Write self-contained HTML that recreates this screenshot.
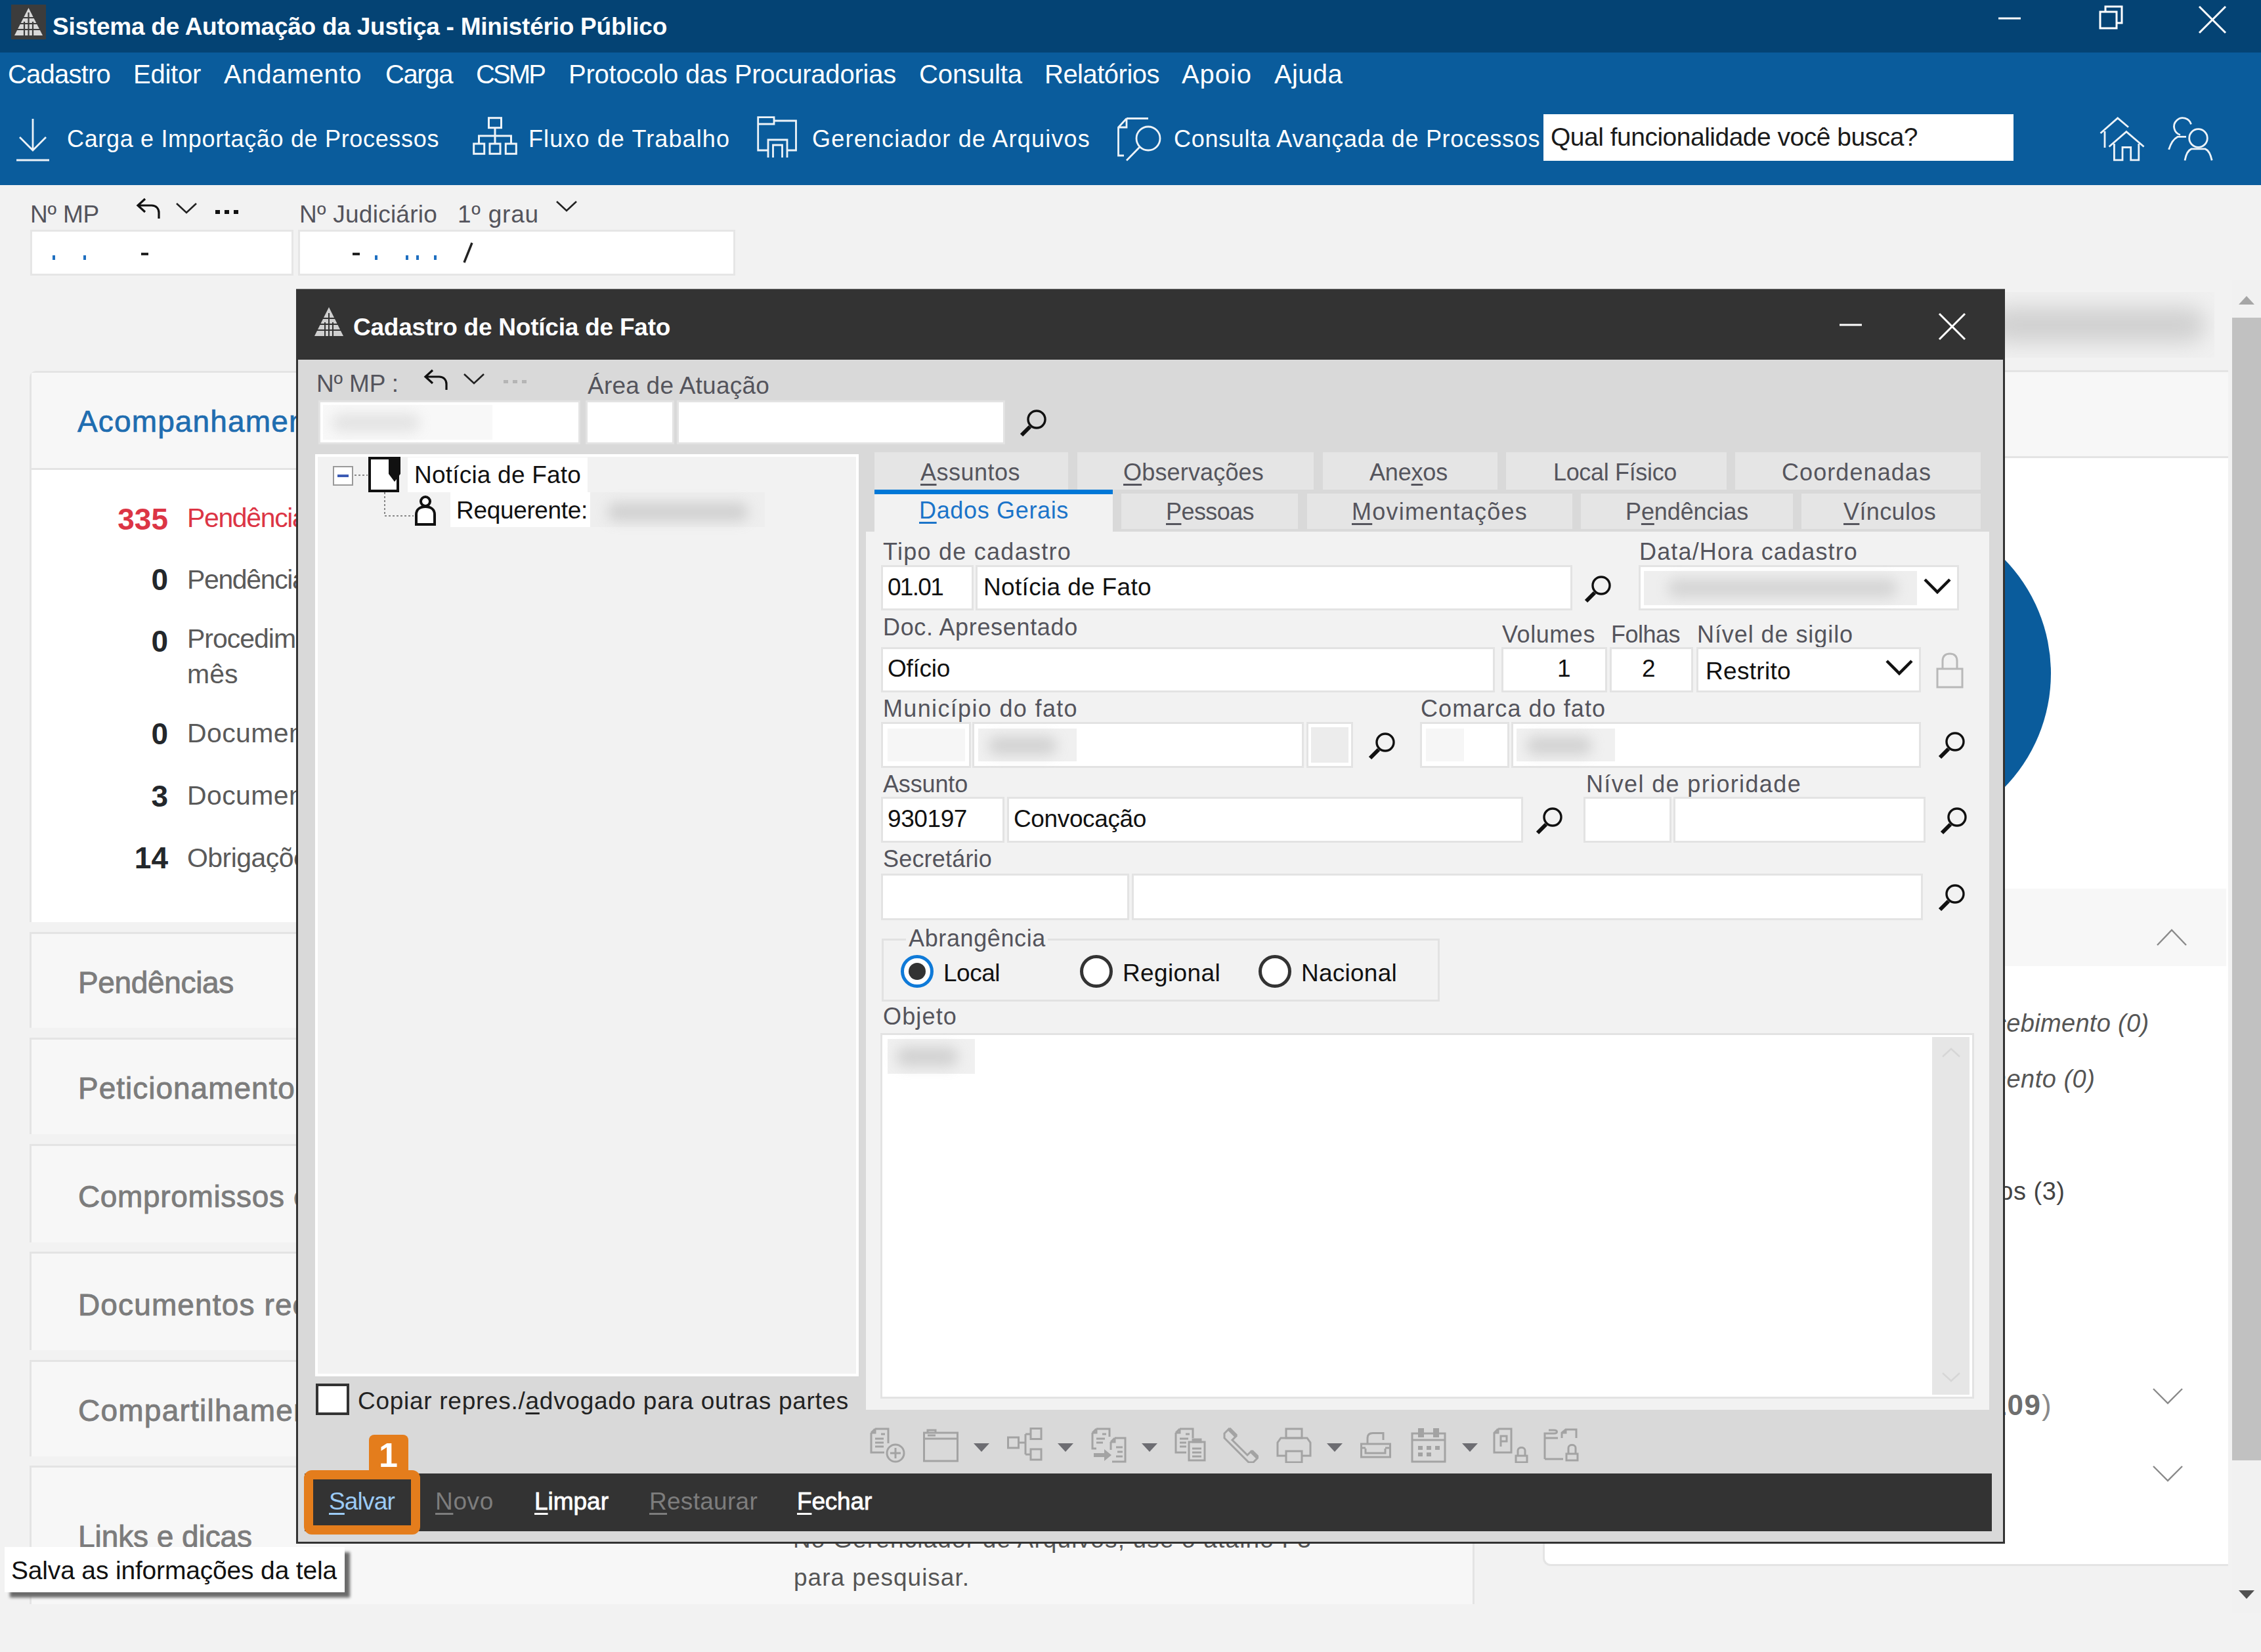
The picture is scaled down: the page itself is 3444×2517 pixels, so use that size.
<!DOCTYPE html>
<html lang="pt-BR"><head><meta charset="utf-8"><title>Sistema de Automação da Justiça - Ministério Público</title>
<style>
html,body{margin:0;padding:0}
body{width:3444px;height:2517px;overflow:hidden;background:#f2f2f2;font-family:"Liberation Sans", sans-serif;position:relative}
div,svg,span.t{position:absolute;box-sizing:border-box}
span.t{white-space:pre;line-height:1}
u{text-decoration-thickness:3px;text-underline-offset:5px}
</style></head>
<body>
<div style="left:0px;top:0px;width:3444px;height:80px;background:#044374;"></div>
<div style="left:0px;top:80px;width:3444px;height:202px;background:#0a5c9c;"></div>
<div style="left:17px;top:7px;width:53px;height:53px;background:#3c3c3c;"></div>
<svg style="left:17px;top:7px;" width="53" height="53" viewBox="0 0 53 53"><polygon points="26.5,5 48,47 5,47" fill="#d8d8d8"/><g stroke="#3c3c3c" stroke-width="2.2"><path d="M5 38H48M10 29H44M15 20H38M20 47V26M33 47V26M26.5 47V12"/></g></svg>
<span class="t" style="left:80.0px;top:21.7px;font-size:37px;color:#fff;font-weight:bold;letter-spacing:-0.24px;">Sistema de Automação da Justiça - Ministério Público</span>
<svg style="left:3030px;top:0px;" width="380" height="60" viewBox="0 0 380 60"><g stroke="#fff" stroke-width="3" fill="none"><path d="M14 28H48"/><path d="M169 18H194V43H169Z"/><path d="M177 18V10H202V35H194"/><path d="M320 10L360 50M360 10L320 50"/></g></svg>
<span class="t" style="left:12.0px;top:93.1px;font-size:40px;color:#fff;letter-spacing:-0.79px;">Cadastro</span>
<span class="t" style="left:203.0px;top:93.1px;font-size:40px;color:#fff;letter-spacing:-0.25px;">Editor</span>
<span class="t" style="left:341.0px;top:93.1px;font-size:40px;color:#fff;letter-spacing:0.60px;">Andamento</span>
<span class="t" style="left:587.0px;top:93.1px;font-size:40px;color:#fff;letter-spacing:-1.39px;">Carga</span>
<span class="t" style="left:725.0px;top:93.1px;font-size:40px;color:#fff;letter-spacing:-2.89px;">CSMP</span>
<span class="t" style="left:866.0px;top:93.1px;font-size:40px;color:#fff;letter-spacing:-0.21px;">Protocolo das Procuradorias</span>
<span class="t" style="left:1400.0px;top:93.1px;font-size:40px;color:#fff;letter-spacing:-0.11px;">Consulta</span>
<span class="t" style="left:1591.0px;top:93.1px;font-size:40px;color:#fff;letter-spacing:-0.51px;">Relatórios</span>
<span class="t" style="left:1800.0px;top:93.1px;font-size:40px;color:#fff;letter-spacing:0.94px;">Apoio</span>
<span class="t" style="left:1941.0px;top:93.1px;font-size:40px;color:#fff;letter-spacing:0.34px;">Ajuda</span>
<span class="t" style="left:102.0px;top:194.0px;font-size:36px;color:#fff;letter-spacing:0.67px;">Carga e Importação de Processos</span>
<span class="t" style="left:805.0px;top:194.0px;font-size:36px;color:#fff;letter-spacing:1.11px;">Fluxo de Trabalho</span>
<span class="t" style="left:1237.0px;top:194.0px;font-size:36px;color:#fff;letter-spacing:1.21px;">Gerenciador de Arquivos</span>
<span class="t" style="left:1788.0px;top:194.0px;font-size:36px;color:#fff;letter-spacing:0.68px;">Consulta Avançada de Processos</span>
<svg style="left:24px;top:178px;" width="52" height="70" viewBox="0 0 52 70"><g stroke="#fff" stroke-width="2.8" fill="none" opacity=".93"><path d="M26 3V50M6 31L26 51L46 31M1 66H51"/></g></svg>
<svg style="left:719.5px;top:177.5px;" width="68" height="58" viewBox="0 0 68 58"><g stroke="#fff" stroke-width="3" fill="none" opacity=".93"><rect x="24.5" y="1.7" width="19" height="15"/><path d="M34 16.7V41M9.5 41V29H58.5V41"/><rect x="1.7" y="41" width="16" height="15.3"/><rect x="26" y="41" width="16" height="15.3"/><rect x="50.3" y="41" width="16" height="15.3"/></g></svg>
<svg style="left:1153px;top:177px;" width="62" height="64" viewBox="0 0 62 64"><g stroke="#fff" stroke-width="2.8" fill="none" opacity=".93"><path d="M1.7 12V1.7H26V7H59.5V52H46M1.7 12V52H17M1.7 12H26V7"/><path d="M17 63V36H46V63M24.5 63V44H38.5V63"/></g></svg>
<svg style="left:1700px;top:176px;" width="72" height="72" viewBox="0 0 72 72"><g stroke="#fff" stroke-width="2.8" fill="none" opacity=".93"><path d="M16 4.5H49M16 4.5L3.5 18V61H12M16 4.5V18H3.5"/><circle cx="49" cy="35" r="18"/><path d="M36 48L16 68.5"/></g></svg>
<div style="left:2351px;top:174px;width:716px;height:71px;background:#fff;"></div>
<span class="t" style="left:2362.0px;top:189.0px;font-size:39px;color:#1a1a1a;letter-spacing:-0.50px;">Qual funcionalidade você busca?</span>
<svg style="left:3198px;top:178px;" width="70" height="70" viewBox="0 0 70 70"><g stroke="#fff" stroke-width="2.8" fill="none" opacity=".93"><path d="M1.5 25L27.7 1.9L44 15.8M8 22V47"/><path d="M14.6 45.5L40.9 22.6L67.6 45.5M22.4 41V65.9H35V46.5H47.7V65.9H59.8V41"/></g></svg>
<svg style="left:3300px;top:176px;" width="72" height="72" viewBox="0 0 72 72"><g stroke="#fff" stroke-width="2.8" fill="none" opacity=".93"><path d="M37.5 13.4A13.2 13.2 0 1 0 21 29.5"/><path d="M30 32.4H17C10 36 6 44 3.6 51.8"/><circle cx="48.5" cy="34.5" r="13.8"/><path d="M28 68.4C30 58 34 52.5 38 50.9H59C63 52.5 67 58 69.2 68.4"/></g></svg>
<span class="t" style="left:46.0px;top:307.7px;font-size:37px;color:#54545c;letter-spacing:-0.20px;">Nº MP</span>
<svg style="left:207px;top:300px;" width="40" height="36" viewBox="0 0 40 36"><g stroke="#111" stroke-width="3.2" fill="none"><path d="M14 3L3 13L14 23M3 13H24C31 13 35 18 35 24V33"/></g></svg>
<svg style="left:267px;top:308px;" width="34" height="20" viewBox="0 0 34 20"><path d="M2 2L17 16L32 2" stroke="#222" stroke-width="2.6" fill="none"/></svg>
<svg style="left:328px;top:318px;" width="38" height="10" viewBox="0 0 38 10"><g fill="#111"><rect x="0" y="2" width="7" height="6"/><rect x="14" y="2" width="7" height="6"/><rect x="28" y="2" width="7" height="6"/></g></svg>
<span class="t" style="left:456.0px;top:307.7px;font-size:37px;color:#54545c;letter-spacing:0.25px;">Nº Judiciário</span>
<span class="t" style="left:697.0px;top:307.7px;font-size:37px;color:#54545c;letter-spacing:0.79px;">1º grau</span>
<svg style="left:846px;top:305px;" width="34" height="20" viewBox="0 0 34 20"><path d="M2 2L17 16L32 2" stroke="#222" stroke-width="2.6" fill="none"/></svg>
<div style="left:46px;top:350px;width:401px;height:70px;background:#fff;border:3px solid #e6e6e6;"></div>
<div style="left:454px;top:350px;width:666px;height:70px;background:#fff;border:3px solid #e6e6e6;"></div>
<div style="left:80px;top:389px;width:4px;height:7px;background:#1f6fc0;"></div>
<div style="left:127px;top:389px;width:4px;height:7px;background:#1f6fc0;"></div>
<div style="left:215px;top:385px;width:11px;height:4px;background:#222;"></div>
<div style="left:537px;top:385px;width:11px;height:4px;background:#222;"></div>
<div style="left:571px;top:389px;width:4px;height:7px;background:#1f6fc0;"></div>
<div style="left:618px;top:389px;width:4px;height:7px;background:#1f6fc0;"></div>
<div style="left:634px;top:389px;width:4px;height:7px;background:#1f6fc0;"></div>
<div style="left:661px;top:389px;width:4px;height:7px;background:#1f6fc0;"></div>
<svg style="left:703px;top:368px;" width="20" height="34" viewBox="0 0 20 34"><path d="M16 2L4 32" stroke="#222" stroke-width="3.4"/></svg>
<div style="left:45px;top:565px;width:2201px;height:840px;background:#fff;border:3px solid #e4e4e4;border-bottom:none;border-radius:10px 10px 0 0;"></div>
<div style="left:48px;top:568px;width:2195px;height:145px;background:#f7f7f7;"></div>
<div style="left:45px;top:713px;width:2201px;height:3px;background:#e4e4e4;"></div>
<span class="t" style="left:118.0px;top:619.1px;font-size:46px;color:#1f6db0;letter-spacing:1.14px;-webkit-text-stroke:0.7px #1f6db0;">Acompanhamento</span>
<span class="t" style="left:0.0px;top:768.1px;font-size:46px;color:#dc3545;font-weight:bold;width:256px;text-align:right;">335</span>
<span class="t" style="left:285.0px;top:769.3px;font-size:41px;color:#dc3545;letter-spacing:-1.37px;">Pendências</span>
<span class="t" style="left:0.0px;top:860.1px;font-size:46px;color:#23272b;font-weight:bold;width:256px;text-align:right;">0</span>
<span class="t" style="left:285.0px;top:862.8px;font-size:41px;color:#5a5a5a;letter-spacing:-1.37px;">Pendências</span>
<span class="t" style="left:0.0px;top:954.1px;font-size:46px;color:#23272b;font-weight:bold;width:256px;text-align:right;">0</span>
<span class="t" style="left:285.0px;top:952.8px;font-size:41px;color:#5a5a5a;letter-spacing:-1.02px;">Procedimentos</span>
<span class="t" style="left:0.0px;top:1095.1px;font-size:46px;color:#23272b;font-weight:bold;width:256px;text-align:right;">0</span>
<span class="t" style="left:285.0px;top:1097.3px;font-size:41px;color:#5a5a5a;letter-spacing:0.39px;">Documentos</span>
<span class="t" style="left:0.0px;top:1190.1px;font-size:46px;color:#23272b;font-weight:bold;width:256px;text-align:right;">3</span>
<span class="t" style="left:285.0px;top:1191.8px;font-size:41px;color:#5a5a5a;letter-spacing:0.39px;">Documentos</span>
<span class="t" style="left:0.0px;top:1284.1px;font-size:46px;color:#23272b;font-weight:bold;width:256px;text-align:right;">14</span>
<span class="t" style="left:285.0px;top:1286.8px;font-size:41px;color:#5a5a5a;letter-spacing:-0.55px;">Obrigações</span>
<span class="t" style="left:285.0px;top:1006.8px;font-size:41px;color:#5a5a5a;">mês</span>
<div style="left:45px;top:1420px;width:2201px;height:146px;background:#f7f7f7;border:3px solid #e4e4e4;border-bottom:none;"></div>
<span class="t" style="left:119.0px;top:1473.6px;font-size:46px;color:#7c7c7c;letter-spacing:-0.34px;-webkit-text-stroke:0.9px #7c7c7c;">Pendências</span>
<div style="left:45px;top:1581px;width:2201px;height:147px;background:#f7f7f7;border:3px solid #e4e4e4;border-bottom:none;"></div>
<span class="t" style="left:119.0px;top:1634.6px;font-size:46px;color:#7c7c7c;letter-spacing:0.99px;-webkit-text-stroke:0.9px #7c7c7c;">Peticionamento</span>
<div style="left:45px;top:1743px;width:2201px;height:150px;background:#f7f7f7;border:3px solid #e4e4e4;border-bottom:none;"></div>
<span class="t" style="left:119.0px;top:1799.6px;font-size:46px;color:#7c7c7c;letter-spacing:0.65px;-webkit-text-stroke:0.9px #7c7c7c;">Compromissos e</span>
<div style="left:45px;top:1907px;width:2201px;height:150px;background:#f7f7f7;border:3px solid #e4e4e4;border-bottom:none;"></div>
<span class="t" style="left:119.0px;top:1964.6px;font-size:46px;color:#7c7c7c;letter-spacing:1.13px;-webkit-text-stroke:0.9px #7c7c7c;">Documentos rec</span>
<div style="left:45px;top:2072px;width:2201px;height:147px;background:#f7f7f7;border:3px solid #e4e4e4;border-bottom:none;"></div>
<span class="t" style="left:119.0px;top:2125.6px;font-size:46px;color:#7c7c7c;letter-spacing:1.24px;-webkit-text-stroke:0.9px #7c7c7c;">Compartilhamento</span>
<div style="left:45px;top:2233px;width:2201px;height:211px;background:#f7f7f7;border:3px solid #e4e4e4;border-bottom:none;"></div>
<span class="t" style="left:119.0px;top:2317.6px;font-size:46px;color:#7c7c7c;letter-spacing:-0.07px;-webkit-text-stroke:0.9px #7c7c7c;">Links e dicas</span>
<span class="t" style="left:1209.0px;top:2384.7px;font-size:37px;color:#555;letter-spacing:1.00px;">para pesquisar.</span>
<span class="t" style="left:1208.0px;top:2326.7px;font-size:37px;color:#555;letter-spacing:1.15px;">No Gerenciador de Arquivos, use o atalho F3</span>
<div style="left:2350px;top:564px;width:1044px;height:1822px;background:#fff;border:3px solid #e4e4e4;border-right:none;border-radius:0 0 0 12px;"></div>
<div style="left:3054px;top:445px;width:319px;height:100px;background:#f0f0f0;overflow:hidden"><div style="left:-24px;top:23px;width:330px;height:54px;background:#9a9a9a;filter:blur(16px);opacity:.36;border-radius:27px"></div></div>
<div style="left:2353px;top:567px;width:1041px;height:129px;background:#f7f7f7;"></div>
<div style="left:2350px;top:695px;width:1044px;height:3px;background:#e4e4e4;"></div>
<div style="left:2626px;top:777px;width:498px;height:498px;border-radius:50%;background:#0a5c9c"></div>
<div style="left:2353px;top:1354px;width:1038px;height:118px;background:#f7f7f7;"></div>
<svg style="left:3284px;top:1414px;" width="48" height="28" viewBox="0 0 48 28"><path d="M2 26L24 3L46 26" stroke="#8a8a8a" stroke-width="2.4" fill="none"/></svg>
<span class="t" style="left:2781.6px;top:1539.8px;font-size:38px;color:#555;font-style:italic;letter-spacing:0.31px;">Aguardando recebimento (0)</span>
<span class="t" style="left:2868.7px;top:1624.8px;font-size:38px;color:#555;font-style:italic;letter-spacing:0.50px;">Em andamento (0)</span>
<span class="t" style="left:2891.4px;top:1795.8px;font-size:38px;color:#444;letter-spacing:0.50px;">Concluídos (3)</span>
<span class="t" style="left:2756.5px;top:2118.8px;font-size:44px;color:#6e6e6e;font-weight:bold;letter-spacing:1.52px;">Realizados (109</span>
<span class="t" style="left:3110.0px;top:2118.8px;font-size:44px;color:#8a8a8a;">)</span>
<svg style="left:3278px;top:2113px;" width="48" height="28" viewBox="0 0 48 28"><path d="M2 3L24 25L46 3" stroke="#8a8a8a" stroke-width="2.4" fill="none"/></svg>
<svg style="left:3278px;top:2231px;" width="48" height="28" viewBox="0 0 48 28"><path d="M2 3L24 25L46 3" stroke="#8a8a8a" stroke-width="2.4" fill="none"/></svg>
<div style="left:3400px;top:427px;width:44px;height:2030px;background:#f1f1f1;"></div>
<div style="left:3400px;top:484px;width:44px;height:1741px;background:#c1c1c1;"></div>
<svg style="left:3408px;top:448px;" width="28" height="18" viewBox="0 0 28 18"><path d="M2 16L14 3L26 16Z" fill="#a6a6a6"/></svg>
<svg style="left:3408px;top:2420px;" width="28" height="18" viewBox="0 0 28 18"><path d="M2 3L14 16L26 3Z" fill="#505050"/></svg>
<div style="left:451px;top:440px;width:2603px;height:1912px;background:#d9d9d9;border:3px solid #333;border-top:none;"></div>
<div style="left:451px;top:440px;width:2603px;height:108px;background:#333333;"></div>
<div style="left:451px;top:440px;width:2603px;height:1px;background:#6a6a6a;"></div>
<svg style="left:478px;top:467px;" width="47" height="47" viewBox="0 0 47 47"><polygon points="23,1 45,45 1,45" fill="#cfcfcf"/><g stroke="#333" stroke-width="2"><path d="M1 36H45M6 27H40M11 18H35M17 45V24M29 45V24M23 45V10"/></g></svg>
<span class="t" style="left:538.0px;top:479.7px;font-size:37px;color:#fff;font-weight:bold;letter-spacing:-0.23px;">Cadastro de Notícia de Fato</span>
<svg style="left:2800px;top:470px;" width="200" height="55" viewBox="0 0 200 55"><g stroke="#fff" stroke-width="3" fill="none"><path d="M2 25H36"/><path d="M154 8L193 47M193 8L154 47"/></g></svg>
<span class="t" style="left:482.0px;top:565.7px;font-size:37px;color:#54545c;letter-spacing:-0.13px;">Nº MP :</span>
<svg style="left:645px;top:561px;" width="40" height="36" viewBox="0 0 40 36"><g stroke="#111" stroke-width="3.2" fill="none"><path d="M14 3L3 13L14 23M3 13H24C31 13 35 18 35 24V33"/></g></svg>
<svg style="left:705px;top:568px;" width="34" height="20" viewBox="0 0 34 20"><path d="M2 2L17 16L32 2" stroke="#222" stroke-width="2.6" fill="none"/></svg>
<svg style="left:767px;top:577px;" width="38" height="10" viewBox="0 0 38 10"><g fill="#b5b5b5"><rect x="0" y="2" width="7" height="5"/><rect x="14" y="2" width="7" height="5"/><rect x="28" y="2" width="7" height="5"/></g></svg>
<span class="t" style="left:895.0px;top:568.7px;font-size:37px;color:#54545c;letter-spacing:0.23px;">Área de Atuação</span>
<div style="left:485px;top:610px;width:399px;height:67px;background:#fff;border:3px solid #e3e3e3;"></div>
<div style="left:492px;top:617px;width:258px;height:53px;background:#f8f8f8;"></div>
<div style="left:505px;top:630px;width:135px;height:28px;background:#9a9a9a;filter:blur(10px);opacity:0.22;border-radius:14px"></div>
<div style="left:892px;top:610px;width:135px;height:67px;background:#fff;border:3px solid #e3e3e3;"></div>
<div style="left:1031px;top:610px;width:500px;height:67px;background:#fff;border:3px solid #e3e3e3;"></div>
<svg style="left:1553px;top:623px;" width="44" height="44" viewBox="0 0 44 44"><g stroke="#111" fill="none"><circle cx="26" cy="16" r="13" stroke-width="3.4"/><path d="M16 27L3 40" stroke-width="6"/></g></svg>
<div style="left:480px;top:692px;width:828px;height:1405px;background:#f2f2f2;border:4px solid #fff;"></div>
<div style="left:507px;top:710px;width:31px;height:30px;background:#fff;border:2px solid #9a9a9a;"></div>
<div style="left:514px;top:723px;width:17px;height:4px;background:#3b5bb5;"></div>
<svg style="left:538px;top:720px;" width="24" height="8" viewBox="0 0 24 8"><path d="M2 4H22" stroke="#888" stroke-width="2" stroke-dasharray="3 3"/></svg>
<div style="left:561px;top:696px;width:47px;height:54px;background:#fff;border:4px solid #111;"></div>
<svg style="left:590px;top:694px;" width="22" height="44" viewBox="0 0 22 44"><path d="M2 2H20V28L11 40L2 28Z" fill="#111"/></svg>
<div style="left:621px;top:697px;width:274px;height:53px;background:#fff;"></div>
<span class="t" style="left:631.0px;top:704.7px;font-size:37px;color:#111;letter-spacing:0.21px;">Notícia de Fato</span>
<svg style="left:584px;top:750px;" width="50" height="44" viewBox="0 0 50 44"><path d="M2 0V36H46" stroke="#888" stroke-width="2" stroke-dasharray="3 3" fill="none"/></svg>
<svg style="left:631px;top:754px;" width="34" height="48" viewBox="0 0 34 48"><g stroke="#111" stroke-width="4" fill="#fff"><circle cx="17" cy="10" r="7"/><path d="M3 45V30C3 22 9 18 17 18C25 18 31 22 31 30V45Z"/></g></svg>
<div style="left:686px;top:750px;width:213px;height:53px;background:#fff;"></div>
<span class="t" style="left:695.0px;top:758.7px;font-size:37px;color:#111;letter-spacing:-0.33px;">Requerente:</span>
<div style="left:899px;top:750px;width:266px;height:53px;background:#eeeeee;"></div>
<div style="left:925px;top:766px;width:215px;height:28px;background:#9a9a9a;filter:blur(10px);opacity:0.35;border-radius:14px"></div>
<div style="left:481px;top:2108px;width:51px;height:48px;background:#fff;border:4px solid #333;"></div>
<span class="t" style="left:545.0px;top:2115.7px;font-size:37px;color:#222;letter-spacing:0.72px;">Copiar repres./<u>a</u>dvogado para outras partes</span>
<div style="left:1332px;top:689px;width:295px;height:57px;background:#e5e5e5;"></div>
<span class="t" style="left:1402.0px;top:701.5px;font-size:36px;color:#55555d;letter-spacing:0.49px;"><u>A</u>ssuntos</span>
<div style="left:1641px;top:689px;width:360px;height:57px;background:#e5e5e5;"></div>
<span class="t" style="left:1711.0px;top:701.5px;font-size:36px;color:#55555d;letter-spacing:0.17px;"><u>O</u>bservações</span>
<div style="left:2015px;top:689px;width:266px;height:57px;background:#e5e5e5;"></div>
<span class="t" style="left:2086.0px;top:701.5px;font-size:36px;color:#55555d;letter-spacing:-0.18px;">Ane<u>x</u>os</span>
<div style="left:2294px;top:689px;width:336px;height:57px;background:#e5e5e5;"></div>
<span class="t" style="left:2366.0px;top:701.5px;font-size:36px;color:#55555d;letter-spacing:-0.34px;">Local Físico</span>
<div style="left:2643px;top:689px;width:374px;height:57px;background:#e5e5e5;"></div>
<span class="t" style="left:2714.0px;top:701.5px;font-size:36px;color:#55555d;letter-spacing:1.08px;">Coordenadas</span>
<div style="left:1708px;top:752px;width:269px;height:54px;background:#e5e5e5;"></div>
<span class="t" style="left:1776.0px;top:761.5px;font-size:36px;color:#55555d;letter-spacing:-0.58px;"><u>P</u>essoas</span>
<div style="left:1991px;top:752px;width:404px;height:54px;background:#e5e5e5;"></div>
<span class="t" style="left:2059.0px;top:761.5px;font-size:36px;color:#55555d;letter-spacing:1.22px;"><u>M</u>ovimentações</span>
<div style="left:2408px;top:752px;width:323px;height:54px;background:#e5e5e5;"></div>
<span class="t" style="left:2476.0px;top:761.5px;font-size:36px;color:#55555d;letter-spacing:-0.11px;">P<u>e</u>ndências</span>
<div style="left:2744px;top:752px;width:273px;height:54px;background:#e5e5e5;"></div>
<span class="t" style="left:2808.0px;top:761.5px;font-size:36px;color:#55555d;letter-spacing:0.37px;"><u>V</u>ínculos</span>
<div style="left:1332px;top:746px;width:363px;height:66px;background:#f2f2f2;"></div>
<div style="left:1332px;top:746px;width:363px;height:7px;background:#0078d7;"></div>
<span class="t" style="left:1400.0px;top:759.5px;font-size:36px;color:#1b74c9;letter-spacing:0.66px;"><u>D</u>ados Gerais</span>
<div style="left:1319px;top:810px;width:1711px;height:1338px;background:#f2f2f2;"></div>
<span class="t" style="left:1345.0px;top:822.5px;font-size:36px;color:#54545c;letter-spacing:1.26px;">Tipo de cadastro</span>
<span class="t" style="left:2497.0px;top:822.5px;font-size:36px;color:#54545c;letter-spacing:1.16px;">Data/Hora cadastro</span>
<div style="left:1342px;top:861px;width:141px;height:69px;background:#fff;border:3px solid #e3e3e3;"></div>
<span class="t" style="left:1352.0px;top:875.7px;font-size:37px;color:#111;letter-spacing:-1.72px;">01.01</span>
<div style="left:1486px;top:861px;width:909px;height:69px;background:#fff;border:3px solid #e3e3e3;"></div>
<span class="t" style="left:1498.0px;top:875.7px;font-size:37px;color:#111;letter-spacing:0.34px;">Notícia de Fato</span>
<svg style="left:2413px;top:876px;" width="44" height="44" viewBox="0 0 44 44"><g stroke="#111" fill="none"><circle cx="26" cy="16" r="13" stroke-width="3.4"/><path d="M16 27L3 40" stroke-width="6"/></g></svg>
<div style="left:2496px;top:861px;width:488px;height:69px;background:#fff;border:3px solid #e3e3e3;"></div>
<div style="left:2504px;top:870px;width:416px;height:52px;background:#eeeeee;"></div>
<div style="left:2540px;top:882px;width:350px;height:28px;background:#9a9a9a;filter:blur(10px);opacity:0.3;border-radius:14px"></div>
<svg style="left:2929px;top:880px;" width="44" height="28" viewBox="0 0 44 28"><path d="M3 3L22 22L41 3" stroke="#111" stroke-width="4.5" fill="none"/></svg>
<span class="t" style="left:1345.0px;top:937.5px;font-size:36px;color:#54545c;letter-spacing:0.67px;">Doc. Apresentado</span>
<span class="t" style="left:2288.0px;top:948.5px;font-size:36px;color:#54545c;letter-spacing:0.56px;">Volumes</span>
<span class="t" style="left:2454.0px;top:948.5px;font-size:36px;color:#54545c;letter-spacing:-0.51px;">Folhas</span>
<span class="t" style="left:2585.0px;top:948.5px;font-size:36px;color:#54545c;letter-spacing:0.93px;">Nível de sigilo</span>
<div style="left:1342px;top:986px;width:935px;height:69px;background:#fff;border:3px solid #e3e3e3;"></div>
<span class="t" style="left:1352.0px;top:999.7px;font-size:37px;color:#111;letter-spacing:-0.27px;">Ofício</span>
<div style="left:2287px;top:986px;width:161px;height:69px;background:#fff;border:3px solid #e3e3e3;"></div>
<span class="t" style="left:2372.0px;top:999.7px;font-size:37px;color:#111;">1</span>
<div style="left:2452px;top:986px;width:127px;height:69px;background:#fff;border:3px solid #e3e3e3;"></div>
<span class="t" style="left:2501.0px;top:999.7px;font-size:37px;color:#111;">2</span>
<div style="left:2584px;top:986px;width:342px;height:69px;background:#fff;border:3px solid #e3e3e3;"></div>
<span class="t" style="left:2598.0px;top:1003.7px;font-size:37px;color:#111;letter-spacing:0.31px;">Restrito</span>
<svg style="left:2871px;top:1004px;" width="44" height="28" viewBox="0 0 44 28"><path d="M3 3L22 22L41 3" stroke="#111" stroke-width="4.5" fill="none"/></svg>
<svg style="left:2949px;top:993px;" width="42" height="58" viewBox="0 0 42 58"><g stroke="#b8b8b8" stroke-width="3" fill="none"><path d="M10 26V14C10 6 15 3 21 3C27 3 32 6 32 14V26"/><rect x="2" y="26" width="38" height="28"/></g></svg>
<span class="t" style="left:1345.0px;top:1061.5px;font-size:36px;color:#54545c;letter-spacing:1.34px;">Município do fato</span>
<span class="t" style="left:2164.0px;top:1061.5px;font-size:36px;color:#54545c;letter-spacing:1.06px;">Comarca do fato</span>
<div style="left:1342px;top:1100px;width:137px;height:70px;background:#fff;border:3px solid #e3e3e3;"></div>
<div style="left:1481px;top:1100px;width:505px;height:70px;background:#fff;border:3px solid #e3e3e3;"></div>
<div style="left:1990px;top:1100px;width:71px;height:70px;background:#fff;border:3px solid #e3e3e3;"></div>
<div style="left:1352px;top:1110px;width:118px;height:50px;background:#f6f6f6;"></div>
<div style="left:1490px;top:1110px;width:150px;height:50px;background:#f0f0f0;"></div>
<div style="left:1505px;top:1122px;width:105px;height:28px;background:#9a9a9a;filter:blur(10px);opacity:0.35;border-radius:14px"></div>
<div style="left:1997px;top:1108px;width:57px;height:54px;background:#ececec;"></div>
<svg style="left:2084px;top:1115px;" width="44" height="44" viewBox="0 0 44 44"><g stroke="#111" fill="none"><circle cx="26" cy="16" r="13" stroke-width="3.4"/><path d="M16 27L3 40" stroke-width="6"/></g></svg>
<div style="left:2163px;top:1100px;width:136px;height:70px;background:#fff;border:3px solid #e3e3e3;"></div>
<div style="left:2302px;top:1100px;width:624px;height:70px;background:#fff;border:3px solid #e3e3e3;"></div>
<div style="left:2172px;top:1110px;width:58px;height:50px;background:#f6f6f6;"></div>
<div style="left:2310px;top:1110px;width:150px;height:50px;background:#f0f0f0;"></div>
<div style="left:2325px;top:1122px;width:100px;height:28px;background:#9a9a9a;filter:blur(10px);opacity:0.35;border-radius:14px"></div>
<svg style="left:2952px;top:1114px;" width="44" height="44" viewBox="0 0 44 44"><g stroke="#111" fill="none"><circle cx="26" cy="16" r="13" stroke-width="3.4"/><path d="M16 27L3 40" stroke-width="6"/></g></svg>
<span class="t" style="left:1345.0px;top:1176.5px;font-size:36px;color:#54545c;letter-spacing:-0.15px;">Assunto</span>
<span class="t" style="left:2416.0px;top:1176.5px;font-size:36px;color:#54545c;letter-spacing:1.36px;">Nível de prioridade</span>
<div style="left:1342px;top:1214px;width:188px;height:70px;background:#fff;border:3px solid #e3e3e3;"></div>
<span class="t" style="left:1352.0px;top:1228.7px;font-size:37px;color:#111;letter-spacing:-0.41px;">930197</span>
<div style="left:1534px;top:1214px;width:786px;height:70px;background:#fff;border:3px solid #e3e3e3;"></div>
<span class="t" style="left:1544.0px;top:1228.7px;font-size:37px;color:#111;letter-spacing:-0.37px;">Convocação</span>
<svg style="left:2339px;top:1229px;" width="44" height="44" viewBox="0 0 44 44"><g stroke="#111" fill="none"><circle cx="26" cy="16" r="13" stroke-width="3.4"/><path d="M16 27L3 40" stroke-width="6"/></g></svg>
<div style="left:2412px;top:1214px;width:134px;height:70px;background:#fff;border:3px solid #e3e3e3;"></div>
<div style="left:2549px;top:1214px;width:384px;height:70px;background:#fff;border:3px solid #e3e3e3;"></div>
<svg style="left:2955px;top:1229px;" width="44" height="44" viewBox="0 0 44 44"><g stroke="#111" fill="none"><circle cx="26" cy="16" r="13" stroke-width="3.4"/><path d="M16 27L3 40" stroke-width="6"/></g></svg>
<span class="t" style="left:1345.0px;top:1290.5px;font-size:36px;color:#54545c;letter-spacing:0.19px;">Secretário</span>
<div style="left:1342px;top:1331px;width:378px;height:71px;background:#fff;border:3px solid #e3e3e3;"></div>
<div style="left:1724px;top:1331px;width:1205px;height:71px;background:#fff;border:3px solid #e3e3e3;"></div>
<svg style="left:2952px;top:1346px;" width="44" height="44" viewBox="0 0 44 44"><g stroke="#111" fill="none"><circle cx="26" cy="16" r="13" stroke-width="3.4"/><path d="M16 27L3 40" stroke-width="6"/></g></svg>
<div style="left:1343px;top:1430px;width:850px;height:96px;border:3px solid #e2e2e2;"></div>
<div style="left:1380px;top:1420px;width:216px;height:30px;background:#f2f2f2;"></div>
<span class="t" style="left:1384.0px;top:1411.5px;font-size:36px;color:#54545c;letter-spacing:0.62px;">Abrangência</span>
<div style="left:1372px;top:1455px;width:50px;height:50px;border-radius:50%;border:5px solid #0f7ad8;background:#fff"></div>
<div style="left:1384px;top:1467px;width:26px;height:26px;border-radius:50%;background:#333"></div>
<div style="left:1645px;top:1455px;width:50px;height:50px;border-radius:50%;border:5px solid #333;background:#fff"></div>
<div style="left:1917px;top:1455px;width:50px;height:50px;border-radius:50%;border:5px solid #333;background:#fff"></div>
<span class="t" style="left:1437.0px;top:1463.7px;font-size:37px;color:#111;letter-spacing:-0.49px;">Local</span>
<span class="t" style="left:1710.0px;top:1463.7px;font-size:37px;color:#111;letter-spacing:0.37px;">Regional</span>
<span class="t" style="left:1982.0px;top:1463.7px;font-size:37px;color:#111;letter-spacing:0.25px;">Nacional</span>
<span class="t" style="left:1345.0px;top:1530.5px;font-size:36px;color:#54545c;letter-spacing:1.15px;">Objeto</span>
<div style="left:1341px;top:1574px;width:1666px;height:557px;background:#fff;border:3px solid #e3e3e3;"></div>
<div style="left:2943px;top:1580px;width:57px;height:545px;background:#e6e6e6;"></div>
<svg style="left:2957px;top:1596px;" width="30" height="16" viewBox="0 0 30 16"><path d="M2 14L15 2L28 14" stroke="#d6d6d6" stroke-width="2.4" fill="none"/></svg>
<svg style="left:2957px;top:2090px;" width="30" height="16" viewBox="0 0 30 16"><path d="M2 2L15 14L28 2" stroke="#d6d6d6" stroke-width="2.4" fill="none"/></svg>
<div style="left:1352px;top:1583px;width:133px;height:53px;background:#f0f0f0;"></div>
<div style="left:1365px;top:1595px;width:95px;height:30px;background:#9a9a9a;filter:blur(10px);opacity:0.35;border-radius:15px"></div>
<div style="left:464px;top:2245px;width:2570px;height:88px;background:#333333;"></div>
<span class="t" style="left:501.0px;top:2268.7px;font-size:37px;color:#9ccbf5;letter-spacing:-0.82px;"><u>S</u>alvar</span>
<span class="t" style="left:663.0px;top:2268.7px;font-size:37px;color:#7d7d7d;letter-spacing:0.65px;"><u>N</u>ovo</span>
<span class="t" style="left:814.0px;top:2268.7px;font-size:37px;color:#fff;letter-spacing:-0.02px;-webkit-text-stroke:0.8px #fff;"><u>L</u>impar</span>
<span class="t" style="left:989.0px;top:2268.7px;font-size:37px;color:#7d7d7d;letter-spacing:0.28px;"><u>R</u>estaurar</span>
<span class="t" style="left:1214.0px;top:2268.7px;font-size:37px;color:#fff;letter-spacing:-0.19px;-webkit-text-stroke:0.8px #fff;"><u>F</u>echar</span>
<div style="left:463px;top:2240px;width:177px;height:98px;border:14px solid #e47d1c;border-radius:12px;"></div>
<div style="left:562px;top:2186px;width:60px;height:60px;background:#e47d1c;border-radius:8px 8px 0 0;"></div>
<span class="t" style="left:577.0px;top:2191.0px;font-size:52px;color:#fff;font-weight:bold;">1</span>
<svg style="left:1325px;top:2175px;" width="54" height="54" viewBox="0 0 54 54"><g stroke="#a3a3a3" stroke-width="3" fill="none"><path d="M8 2H28V24M2 8L8 2M2 8V38H22M2 8H8V2M17 10H23M8 17H21M8 23H21M8 29H21"/><circle cx="39" cy="39" r="13"/><path d="M39 31V47M31 39H47"/></g></svg>
<svg style="left:1406px;top:2175px;" width="54" height="54" viewBox="0 0 54 54"><g stroke="#a3a3a3" stroke-width="3" fill="none"><rect x="1.5" y="8" width="51" height="43"/><path d="M1.5 17H52.5M7 8V4H19V8M7 12H19"/></g></svg>
<svg style="left:1483px;top:2198px;" width="24" height="14" viewBox="0 0 24 14"><path d="M0 1H24L12 14Z" fill="#6d6d72"/></svg>
<svg style="left:1534px;top:2175px;" width="54" height="54" viewBox="0 0 54 54"><g stroke="#a3a3a3" stroke-width="3" fill="none"><rect x="1.5" y="15" width="16" height="16"/><rect x="36" y="1.5" width="16" height="16"/><rect x="36" y="33" width="16" height="16"/><path d="M17 23H28M28 10V41M28 10H36M28 41H36"/></g></svg>
<svg style="left:1611px;top:2198px;" width="24" height="14" viewBox="0 0 24 14"><path d="M0 1H24L12 14Z" fill="#6d6d72"/></svg>
<svg style="left:1662px;top:2175px;" width="54" height="54" viewBox="0 0 54 54"><g stroke="#a3a3a3" stroke-width="3" fill="none"><path d="M8 2H28V14M2 8L8 2M2 8V32H8M2 8H8V2M17 10H23M8 17H21M8 23H18"/><path d="M36 16H52V52H32M30 22L36 16M30 22H36V16M30 22V34M38 30H48M40 37H48M38 44H48"/><path d="M4 39H20V33L31 42L20 51V45H4Z" fill="#a3a3a3" stroke="none"/></g></svg>
<svg style="left:1739px;top:2198px;" width="24" height="14" viewBox="0 0 24 14"><path d="M0 1H24L12 14Z" fill="#6d6d72"/></svg>
<svg style="left:1789px;top:2175px;" width="48" height="54" viewBox="0 0 48 54"><g stroke="#a3a3a3" stroke-width="3" fill="none"><path d="M8 2H28V16M2 8L8 2M2 8V38H18M2 8H8V2M17 10H23M8 17H21M8 23H18M8 29H18"/><rect x="22" y="22" width="24" height="28"/><path d="M28 22V18H40V22Z" fill="#a3a3a3"/><path d="M27 32H41M27 38H41M27 44H41"/></g></svg>
<svg style="left:1863px;top:2175px;" width="54" height="54" viewBox="0 0 54 54"><g stroke="#a3a3a3" stroke-width="3" fill="none"><path d="M9 2L20 13L14 19L37 42L43 36L53 46L46 53H39L2 16V9Z"/><path d="M9 2L20 13M43 36L53 46" stroke-width="6"/></g></svg>
<svg style="left:1944px;top:2175px;" width="54" height="54" viewBox="0 0 54 54"><g stroke="#a3a3a3" stroke-width="3" fill="none"><rect x="15" y="2" width="24" height="14"/><path d="M15 16H7L2 23V43H15M39 43H52V23L47 16H39M7 16H47"/><rect x="15" y="36" width="24" height="17"/></g></svg>
<svg style="left:2021px;top:2198px;" width="24" height="14" viewBox="0 0 24 14"><path d="M0 1H24L12 14Z" fill="#6d6d72"/></svg>
<svg style="left:2072px;top:2182px;" width="47" height="40" viewBox="0 0 47 40"><g stroke="#a3a3a3" stroke-width="3" fill="none"><rect x="1.5" y="18" width="44" height="20"/><path d="M8 25V32H38V25M11 18V9C11 4 14 1.5 19 1.5H35V12M1.5 24H8M38 24H45"/></g></svg>
<svg style="left:2149px;top:2175px;" width="54" height="54" viewBox="0 0 54 54"><g stroke="#a3a3a3" stroke-width="3" fill="none"><rect x="2" y="9" width="50" height="43"/><path d="M2 19H52"/><g fill="#a3a3a3" stroke="none"><rect x="11" y="1" width="9" height="14"/><rect x="34" y="1" width="9" height="14"/><rect x="11" y="28" width="7" height="6"/><rect x="24" y="28" width="7" height="6"/><rect x="37" y="28" width="7" height="6"/><rect x="11" y="38" width="7" height="6"/><rect x="24" y="38" width="7" height="6"/></g></g></svg>
<svg style="left:2227px;top:2198px;" width="24" height="14" viewBox="0 0 24 14"><path d="M0 1H24L12 14Z" fill="#6d6d72"/></svg>
<svg style="left:2274px;top:2175px;" width="54" height="54" viewBox="0 0 54 54"><g stroke="#a3a3a3" stroke-width="3" fill="none"><path d="M8 2H28V38H2V8L8 2M2 8H8V2"/><path d="M12 29V13H21V21H12"/><rect x="35" y="43" width="17" height="10"/><path d="M38 43V35C38 29 49 29 49 35V43"/></g></svg>
<svg style="left:2351px;top:2175px;" width="54" height="54" viewBox="0 0 54 54"><g stroke="#a3a3a3" stroke-width="3" fill="none"><path d="M2 48V9H16C22 9 22 4 16 4H8M2 16H22M28 16V8L34 3H50V16M28 8H34V3M2 48H30"/><rect x="35" y="40" width="17" height="10"/><path d="M38 40V31C38 25 49 25 49 31V40"/></g></svg>
<div style="left:15px;top:2365px;width:518px;height:69px;background:#6b6b6b;filter:blur(2px);"></div>
<div style="left:7px;top:2357px;width:518px;height:69px;background:#fff;"></div>
<span class="t" style="left:17.0px;top:2373.0px;font-size:39px;color:#111;letter-spacing:-0.17px;">Salva as informações da tela</span>
</body></html>
